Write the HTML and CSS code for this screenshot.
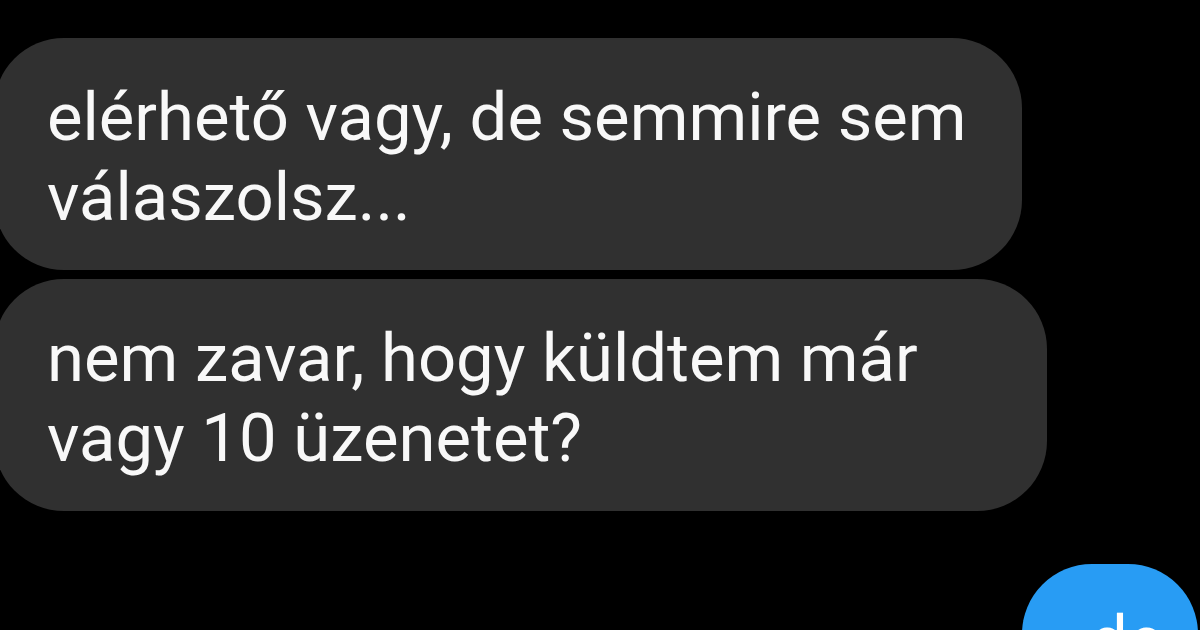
FILE: index.html
```html
<!doctype html>
<html>
	<head>
		<title>Üzenetek</title>

		<link rel="stylesheet" href="styles.css">
	</head>
	<body>
		<main class="thread">
			<div class="bubble incoming first">elérhető vagy, de semmire sem<br>válaszolsz...</div>
			<div class="bubble incoming second">nem zavar, hogy küldtem már<br>vagy 10 üzenetet?</div>
			<div class="bubble outgoing">de</div>
		</main>
	</body>
</html>
```

FILE: styles.css
```css
html, body {
	margin: 0;
	height: 630px;
	overflow: hidden;
	background: rgb(0,0,0);
}

body {
	color: rgb(248,248,248);
	font-family: Roboto, "Noto Sans", "Liberation Sans", sans-serif;
	font-weight: 400;
}

	.thread {
		display: flex;
		flex-direction: column;
		padding-top: 38px;
	}

	.bubble {
		box-sizing: border-box;
		font-size: 67px;
		line-height: 80px;
		padding: 39px 30px 33px 53px;
		border-radius: 70px;
		white-space: nowrap;
	}

	.incoming {
		background: rgb(48,48,48);
		margin-left: -6px;
	}

	.first {
		width: 1028px;
	}

	.second {
		width: 1053px;
		margin-top: 9px;
	}

	.outgoing {
		align-self: flex-end;
		background: rgb(40,156,244);
		color: rgb(255,255,255);
		margin-top: 53px;
		margin-right: 2px;
		width: 176px;
		padding: 36px 0 33px 68px;
	}
```
